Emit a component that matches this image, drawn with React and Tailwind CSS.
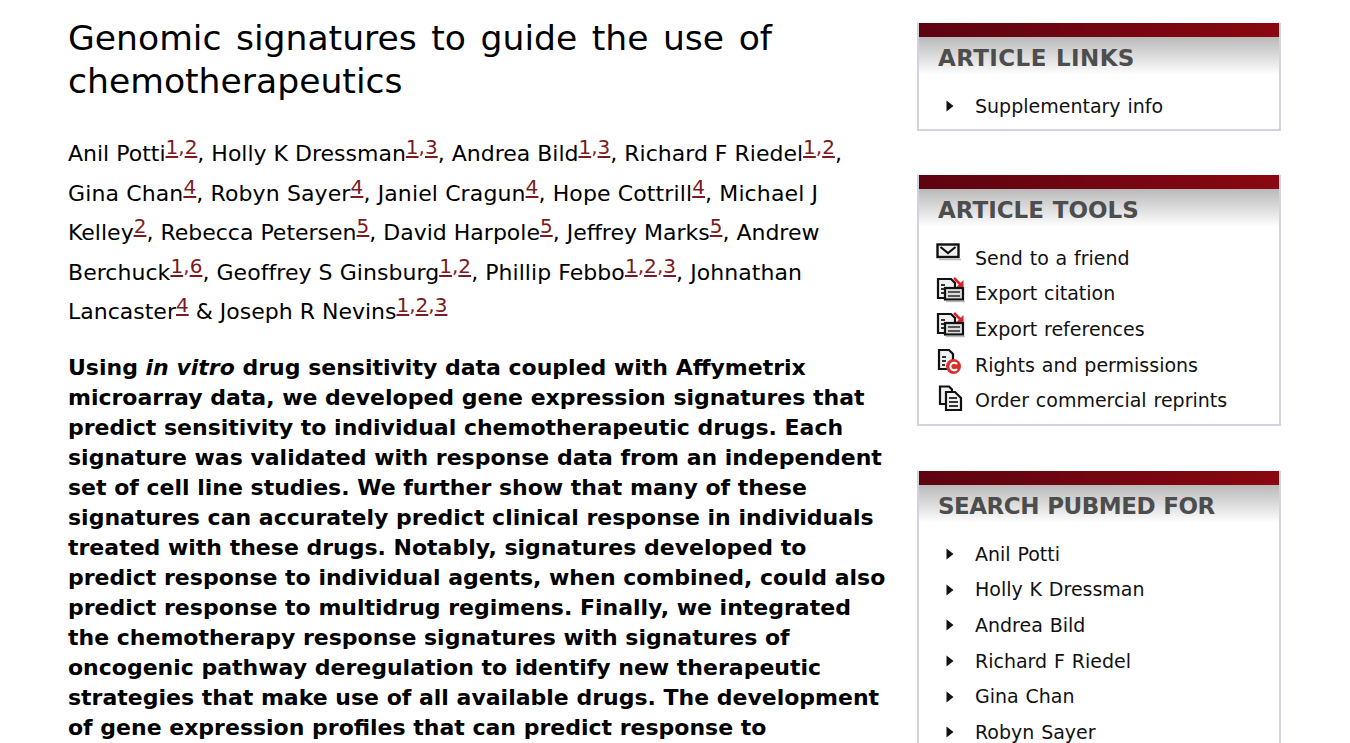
import React from 'react';

const authorLines = [
  { cls: '', parts: [['Anil Potti', '1', '2'], ', ', ['Holly K Dressman', '1', '3'], ', ', ['Andrea Bild', '1', '3'], ', ', ['Richard F Riedel', '1', '2'], ','] },
  { cls: 'tracking-[0.12px]', parts: [['Gina Chan', '4'], ', ', ['Robyn Sayer', '4'], ', ', ['Janiel Cragun', '4'], ', ', ['Hope Cottrill', '4'], ', Michael J'] },
  { cls: '', parts: [['Kelley', '2'], ', ', ['Rebecca Petersen', '5'], ', ', ['David Harpole', '5'], ', ', ['Jeffrey Marks', '5'], ', Andrew'] },
  { cls: 'tracking-[0.05px]', parts: [['Berchuck', '1', '6'], ', ', ['Geoffrey S Ginsburg', '1', '2'], ', ', ['Phillip Febbo', '1', '2', '3'], ', Johnathan'] },
  { cls: '', parts: [['Lancaster', '4'], ' & ', ['Joseph R Nevins', '1', '2', '3']] },
];

const abstractLines = [
  <>Using <em>in vitro</em> drug sensitivity data coupled with Affymetrix</>,
  'microarray data, we developed gene expression signatures that',
  'predict sensitivity to individual chemotherapeutic drugs. Each',
  'signature was validated with response data from an independent',
  'set of cell line studies. We further show that many of these',
  'signatures can accurately predict clinical response in individuals',
  'treated with these drugs. Notably, signatures developed to',
  'predict response to individual agents, when combined, could also',
  'predict response to multidrug regimens. Finally, we integrated',
  'the chemotherapy response signatures with signatures of',
  'oncogenic pathway deregulation to identify new therapeutic',
  'strategies that make use of all available drugs. The development',
  'of gene expression profiles that can predict response to',
];

function Author({ parts }) {
  const [name, ...refs] = parts;
  return (
    <>
      {name}
      <sup className="text-[20px] leading-none top-[-7px] align-baseline relative">
        {refs.map((r, i) => (
          <span key={r}>
            {i > 0 && <span className="text-[#8a1a20]">,</span>}
            <a className="text-[#7a1a20] underline underline-offset-2">{r}</a>
          </span>
        ))}
      </sup>
    </>
  );
}

function Arrow() {
  return (
    <svg width="8" height="12" viewBox="0 0 8 12" className="shrink-0">
      <path d="M0.5 0.5 L7.5 6 L0.5 11.5 Z" fill="#111" />
    </svg>
  );
}

function MailIcon() {
  return (
    <svg width="26" height="18" viewBox="0 0 26 18" className="shrink-0 -translate-y-[4px] -translate-x-[1px]">
      <rect x="1.5" y="1.5" width="21" height="12.5" fill="#f0f0f0" stroke="#111" strokeWidth="2.4" />
      <path d="M4.5 4 L12 10 L19.5 4" fill="none" stroke="#111" strokeWidth="2.2" />
      <path d="M3 16.5 H25" stroke="#bbb" strokeWidth="1.5" />
    </svg>
  );
}

function ExportIcon() {
  return (
    <svg width="30" height="26" viewBox="0 0 30 26" className="shrink-0 -translate-y-[2px] -translate-x-[1px]">
      <path d="M2 2 H15 L19 6 V21 H2 Z" fill="#f0f0f0" stroke="#111" strokeWidth="2.2" />
      <path d="M5 8 H9 M5 12 H8 M5 16 H8" stroke="#333" strokeWidth="1.8" />
      <rect x="9" y="11" width="18" height="11.5" fill="#dcdcdc" stroke="#111" strokeWidth="2.2" />
      <path d="M12 15 H24 M12 19 H24" stroke="#555" strokeWidth="1.8" />
      <path d="M18 1 L24.5 7.5" stroke="#d8232a" strokeWidth="2.6" />
      <path d="M27.5 3 V10 H20.5 Z" fill="#d8232a" />
      <path d="M10 24.5 H29" stroke="#bbb" strokeWidth="1.5" />
    </svg>
  );
}

function RightsIcon() {
  return (
    <svg width="25" height="27" viewBox="0 0 25 27" className="shrink-0 -translate-y-[1px]">
      <path d="M2 2 H12 L16 6 V21 H2 Z" fill="#f0f0f0" stroke="#111" strokeWidth="2.2" />
      <path d="M5 9 H9 M5 13 H9 M5 17 H8" stroke="#333" strokeWidth="1.8" />
      <circle cx="16.5" cy="18.5" r="7.5" fill="#d9302c" />
      <path d="M20 16 A3.8 3.8 0 1 0 20 21" fill="none" stroke="#fff" strokeWidth="2" />
    </svg>
  );
}

function ReprintIcon() {
  return (
    <svg width="26" height="27" viewBox="0 0 26 27" className="shrink-0 translate-x-[1px]">
      <path d="M2 1.5 H11 L14 4.5 V19 H2 Z" fill="#f0f0f0" stroke="#111" strokeWidth="2.2" />
      <path d="M8 7 H17 L23 13 V25 H8 Z" fill="#f0f0f0" stroke="#111" strokeWidth="2.2" />
      <path d="M11 13 H19 M11 17 H20 M11 21 H20" stroke="#333" strokeWidth="1.8" />
    </svg>
  );
}

function Box({ title, titleClass, children, className }) {
  return (
    <div className={`border-2 border-t-0 border-[#d3d3e0] ${className}`}>
      <div className="h-[14px] bg-gradient-to-r from-[#5c0410] to-[#8a0710]" />
      <div className={`h-[38px] bg-gradient-to-b from-[#b9b9b9] to-white pl-[19px] pt-[6px] text-[23px] leading-[30px] font-bold text-[#4d4d4d] ${titleClass}`}>
        {title}
      </div>
      {children}
    </div>
  );
}

function ArrowRow({ children }) {
  return (
    <div className="flex items-center h-[35.7px] pl-[27px] gap-[21px]">
      <Arrow />
      <span>{children}</span>
    </div>
  );
}

function IconRow({ icon, children }) {
  return (
    <div className="flex h-[35.7px] items-center">
      <div className="w-[56px] pl-[18px] flex -translate-y-[2px]">{icon}</div>
      <span>{children}</span>
    </div>
  );
}

export default function App() {
  return (
    <div className="h-[743px] overflow-hidden bg-white text-black flex font-['DejaVu_Sans','Liberation_Sans',sans-serif]">
      <div className="w-[849px] ml-[68px] pt-[17px] shrink-0 whitespace-nowrap">
        <h1 className="text-[34.6px] leading-[43px] font-normal [word-spacing:3.5px]">
          Genomic signatures to guide the use of<br />chemotherapeutics
        </h1>
        <div className="mt-[31px] text-[22px] leading-[39.5px]">
          {authorLines.map((line, i) => (
            <div key={i} className={`h-[39.5px] ${line.cls}`}>
              {line.parts.map((part, j) => (typeof part === 'string' ? <span key={j}>{part}</span> : <Author key={j} parts={part} />))}
            </div>
          ))}
        </div>
        <div className="mt-[21px] text-[22px] leading-[30px] font-bold">
          {abstractLines.map((line, i) => (
            <div key={i}>{line}</div>
          ))}
        </div>
      </div>
      <div className="w-[364px] pt-[23px] shrink-0 text-[19px] [word-spacing:0.8px] text-[#111] whitespace-nowrap">
        <Box title="ARTICLE LINKS" titleClass="tracking-[0.4px]" className="h-[108px]">
          <div className="pt-[13px]">
            <ArrowRow>Supplementary info</ArrowRow>
          </div>
        </Box>
        <Box title="ARTICLE TOOLS" className="mt-[44px] h-[251px]">
          <div className="pt-[13px]">
            <IconRow icon={<MailIcon />}>Send to a friend</IconRow>
            <IconRow icon={<ExportIcon />}>Export citation</IconRow>
            <IconRow icon={<ExportIcon />}>Export references</IconRow>
            <IconRow icon={<RightsIcon />}>Rights and permissions</IconRow>
            <IconRow icon={<ReprintIcon />}>Order commercial reprints</IconRow>
          </div>
        </Box>
        <Box title="SEARCH PUBMED FOR" titleClass="tracking-[-0.5px]" className="mt-[45px] h-[400px]">
          <div className="pt-[13px]">
            {['Anil Potti', 'Holly K Dressman', 'Andrea Bild', 'Richard F Riedel', 'Gina Chan', 'Robyn Sayer'].map(n => (
              <ArrowRow key={n}>{n}</ArrowRow>
            ))}
          </div>
        </Box>
      </div>
    </div>
  );
}
